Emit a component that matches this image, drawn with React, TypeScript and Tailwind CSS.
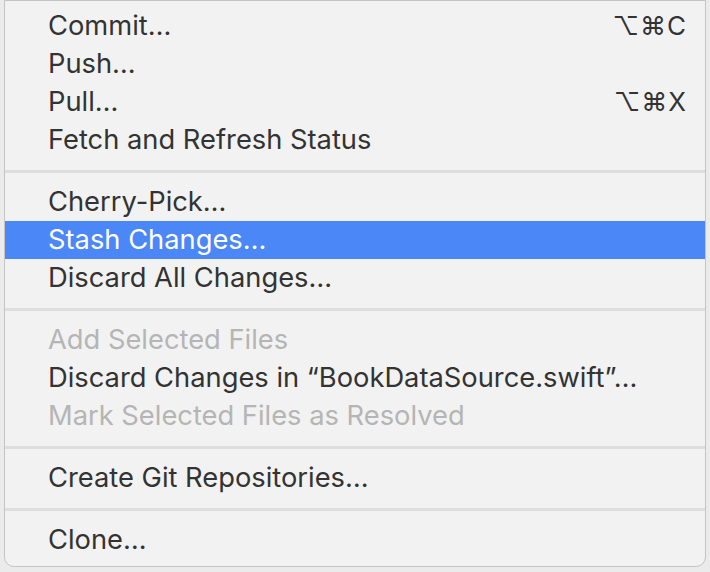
import React from "react";

type Item = { label: string; shortcut?: string; disabled?: boolean; active?: boolean };

const groups: Item[][] = [
  [
    { label: "Commit…", shortcut: "⌥⌘C" },
    { label: "Push…" },
    { label: "Pull…", shortcut: "⌥⌘X" },
    { label: "Fetch and Refresh Status" },
  ],
  [
    { label: "Cherry-Pick…" },
    { label: "Stash Changes…", active: true },
    { label: "Discard All Changes…" },
  ],
  [
    { label: "Add Selected Files", disabled: true },
    { label: "Discard Changes in “BookDataSource.swift”…" },
    { label: "Mark Selected Files as Resolved", disabled: true },
  ],
  [{ label: "Create Git Repositories…" }],
  [{ label: "Clone…" }],
];

function Row({ item }: { item: Item }) {
  const color = item.active
    ? "bg-[#4b87f6] text-white"
    : item.disabled
    ? "text-[#b5b5b5]"
    : "text-[#333333]";
  return (
    <div className={`h-[38px] flex items-center justify-between pl-[43px] pr-[18px] ${color}`}>
      <span>{item.label}</span>
      {item.shortcut && <span className="tracking-[1px] text-[26px]">{item.shortcut}</span>}
    </div>
  );
}

export default function App() {
  return (
    <div
      className="w-[710px] h-[572px] bg-[#ebebeb] pl-[4px] overflow-hidden"
      style={{ fontFamily: "Inter, 'Noto Sans', 'DejaVu Sans', sans-serif" }}
    >
      <div className="w-[702px] h-[567px] bg-[#f2f2f2] border border-[#c4c4c4] rounded-b-[10px] pt-[6px] text-[27.3px] leading-none">
        {groups.map((g, gi) => (
          <div key={gi}>
            {gi > 0 && (
              <div className="h-[24px] flex items-center">
                <div className="h-[3px] w-full bg-[#dedede]" />
              </div>
            )}
            {g.map((it, i) => (
              <Row key={i} item={it} />
            ))}
          </div>
        ))}
      </div>
    </div>
  );
}
